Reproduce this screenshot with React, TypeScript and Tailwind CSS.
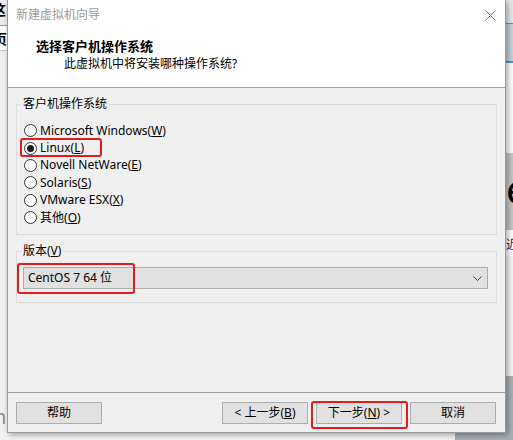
import React from 'react';

const font = "font-['Noto_Sans','Noto_Sans_CJK_SC',sans-serif]";

const osList = [
  { label: 'Microsoft Windows', key: 'W', checked: false },
  { label: 'Linux', key: 'L', checked: true },
  { label: 'Novell NetWare', key: 'E', checked: false },
  { label: 'Solaris', key: 'S', checked: false },
  { label: 'VMware ESX', key: 'X', checked: false },
  { label: '其他', key: 'O', checked: false },
];

const Radio = ({ checked }: { checked: boolean }) => (
  <span className="w-[13px] h-[13px] rounded-full border border-[#333] bg-white flex items-center justify-center shrink-0">
    {checked && <span className="w-[7px] h-[7px] rounded-full bg-[#1a1a1a]" />}
  </span>
);

const Button = ({ children }: { children: React.ReactNode }) => (
  <button className="w-[86px] h-[22px] bg-[#e1e1e1] border border-[#adadad] text-[12px] leading-[20px] text-black flex items-center justify-center">
    {children}
  </button>
);

export default function App() {
  return (
    <div className={`w-[513px] h-[440px] overflow-hidden bg-[#f4f4f4] flex flex-col ${font}`}>
      <div className="flex h-[433px]">
        {/* background app, left edge */}
        <div className="w-[7px] flex flex-col overflow-hidden">
          <div className="h-[25px] bg-[#e9ebef] overflow-hidden">
            <span className="block -ml-[8px] mt-[2px] text-[14px] leading-[16px] font-bold text-black">这</span>
          </div>
          <div className="h-[1px] bg-[#9c9c9c]" />
          <div className="h-[24px] bg-white overflow-hidden">
            <span className="block -ml-[7px] mt-[5px] text-[14px] leading-[16px] font-bold text-black">页</span>
          </div>
          <div className="h-[1px] bg-[#c4c4c4]" />
          <div className="flex-1 bg-[#f0f0f0] flex flex-col justify-end overflow-hidden pb-[6px]">
            <span className="block -ml-[6px] text-[20px] leading-[20px] text-[#8a8a8a]">n</span>
          </div>
        </div>

        {/* dialog */}
        <div className="w-[499px] h-[433px] border border-t-0 border-[#9a9a9a] bg-[#f0f0f0] flex flex-col relative shadow-[2px_2px_6px_rgba(0,0,0,0.35)]">
          <div className="h-[88px] bg-white border-b border-[#a0a0a0] shrink-0">
            <div className="flex items-center justify-between pl-[8px] pr-[9px] pt-[7px] h-[23px]">
              <span className="text-[12px] leading-[16px] text-[#9a9a9a]">新建虚拟机向导</span>
              <svg width="11" height="11" viewBox="0 0 11 11" className="mt-[1px]">
                <path d="M0.5 0.5 L10.5 10.5 M10.5 0.5 L0.5 10.5" stroke="#7a7a7a" strokeWidth="1" fill="none" />
              </svg>
            </div>
            <div className="pl-[28px] pt-[14px]">
              <div className="text-[13px] leading-[18px] font-bold text-black">选择客户机操作系统</div>
              <div className="pl-[28px] text-[12px] leading-[18px] text-black">此虚拟机中将安装哪种操作系统?</div>
            </div>
          </div>

          <div className="flex-1 px-[8px] pt-[8px]">
            <fieldset className="border border-[#dcdcdc] pb-[8px]">
              <legend className="ml-[4px] px-[2px] text-[12px] leading-[16px] text-black">客户机操作系统</legend>
              <div className="pt-[10px] flex flex-col">
                {osList.map((os) => (
                  <div key={os.key} className="h-[17.4px] flex items-center pl-[7px] gap-[3px]">
                    <Radio checked={os.checked} />
                    <span className="text-[12px] leading-[16px] text-black">
                      {os.label}(<u>{os.key}</u>)
                    </span>
                  </div>
                ))}
              </div>
            </fieldset>

            <fieldset className="border border-[#dcdcdc] mt-[8px] pt-[8px] pb-[13px] pl-[6px] pr-[8px]">
              <legend className="ml-[-2px] px-[2px] text-[12px] leading-[16px] text-black">
                版本(<u>V</u>)
              </legend>
              <div className="h-[22px] bg-[#e1e1e1] border border-[#adadad] flex items-center justify-between pl-[4px] pr-[5px]">
                <span className="text-[12px] leading-[16px] text-black">CentOS 7 64 位</span>
                <svg width="9" height="5" viewBox="0 0 9 5">
                  <path d="M0.5 0.5 L4.5 4.5 L8.5 0.5" stroke="#444" strokeWidth="1" fill="none" />
                </svg>
              </div>
            </fieldset>
          </div>

          <div className="h-[40px] border-t border-[#a0a0a0] shrink-0 flex justify-between pt-[9px] px-[8px]">
            <Button>帮助</Button>
            <div className="flex gap-[8px] pr-[1px]">
              <Button>
                &lt; 上一步(<u>B</u>)
              </Button>
              <Button>
                下一步(<u>N</u>) &gt;
              </Button>
              <Button>取消</Button>
            </div>
          </div>

          {/* red annotation boxes */}
          <div className="absolute left-[12px] top-[138px] w-[82px] h-[19px] border-2 border-[#e31b1b] rounded-[3px]" />
          <div className="absolute left-[9px] top-[263px] w-[118px] h-[31px] border-2 border-[#e31b1b] rounded-[3px]" />
          <div className="absolute left-[303px] top-[401px] w-[97px] h-[28px] border-2 border-[#e31b1b] rounded-[3px]" />
        </div>

        {/* background app, right edge */}
        <div className="flex-1 flex flex-col overflow-hidden">
          <div className="h-[23px] bg-[#e8e9eb]" />
          <div className="h-[1px] bg-[#8a8a8a]" />
          <div className="h-[37px] bg-[#c9d0da]" />
          <div className="h-[2px] bg-[#4a93cc]" />
          <div className="h-[90px] bg-white" />
          <div className="h-[77px] bg-[#c6c6c6] overflow-hidden">
            <span className="block mt-[14px] text-[40px] leading-[44px] text-black">e</span>
          </div>
          <div className="h-[26px] bg-white overflow-hidden">
            <span className="block mt-[8px] text-[12px] leading-[14px] text-[#3a1a5a]">近</span>
          </div>
          <div className="h-[120px] bg-[#f5f5f5]" />
          <div className="flex-1 bg-[#a7b0b8]" />
        </div>
      </div>
      <div className="flex-1 flex">
        <div className="w-[455px] bg-[#f4f4f4]" />
        <div className="flex-1 bg-[#a7b0b8]" />
      </div>
    </div>
  );
}
